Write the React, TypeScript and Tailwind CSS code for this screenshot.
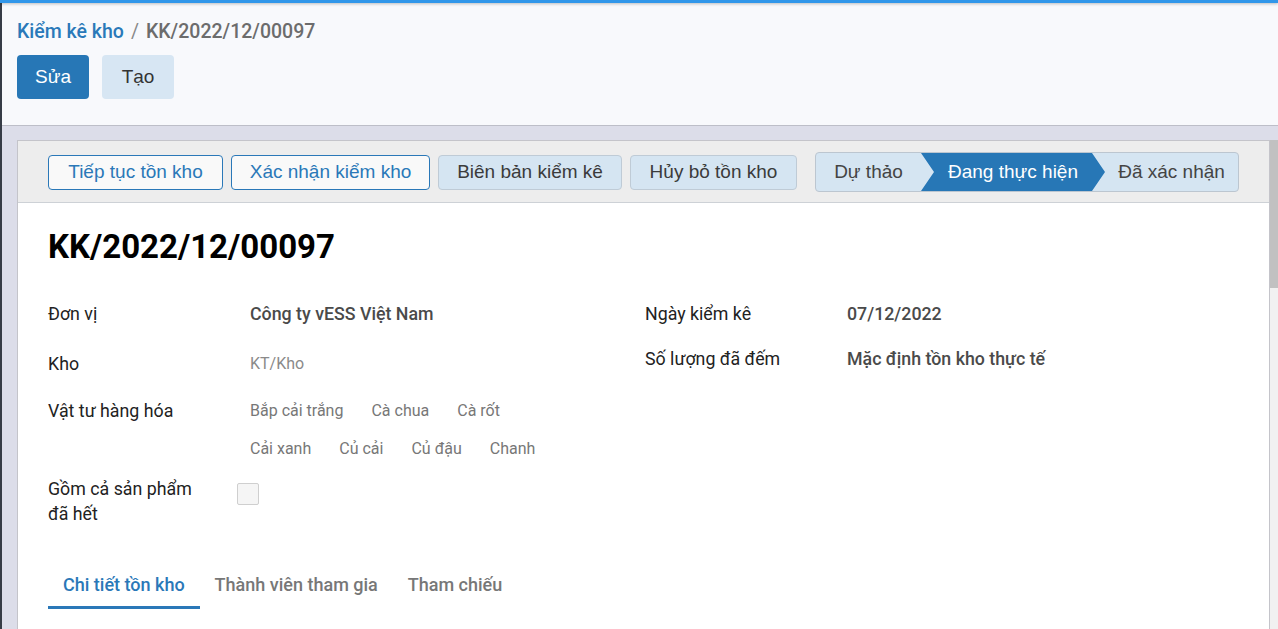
const tagsRow1 = ["Bắp cải trắng", "Cà chua", "Cà rốt"];
const tagsRow2 = ["Cải xanh", "Củ cải", "Củ đậu", "Chanh"];

const App = () => {
  return (
    <div className="h-[629px] w-[1278px] overflow-hidden flex flex-col font-['Roboto',sans-serif] bg-[#dcdde9]">
      {/* top accent bar */}
      <div className="h-[3px] bg-[#3197ea] relative z-10 shadow-[0_1px_3px_rgba(0,0,0,0.25)]"></div>

      <div className="flex flex-1 min-h-0">
        <div className="w-[2px] bg-[#363c46]"></div>

        <div className="flex-1 flex flex-col min-w-0">
          {/* Control panel */}
          <div className="h-[123px] bg-[#f8f9fc] border-b border-[#bdbec8] pl-[15px] pt-[17px]">
            <div className="flex items-center text-[19.5px] leading-[24px] font-medium">
              <span className="text-[#2a79b9]">Kiểm kê kho</span>
              <span className="text-[#888] mx-[7px] font-normal">/</span>
              <span className="text-[#6c6c6c]">KK/2022/12/00097</span>
            </div>
            <div className="flex gap-[13px] mt-[11px] font-['Liberation_Sans',Arial,sans-serif] text-[19px]">
              <button className="w-[72px] h-[44px] rounded-[4px] bg-[#2777b6] text-white">Sửa</button>
              <button className="w-[72px] h-[44px] rounded-[4px] bg-[#d7e6f3] text-[#333]">Tạo</button>
            </div>
          </div>

          {/* Main */}
          <div className="flex-1 flex pt-[14px] pl-[15px] min-h-0">
            <div className="flex-1 bg-white border border-[#c4c4ca] border-b-0 flex flex-col min-w-0">
              {/* status bar */}
              <div className="h-[62px] bg-[#ededed] border-b border-[#cdd1d6] flex items-center justify-between px-[30px] pt-[1px] font-['Liberation_Sans',Arial,sans-serif] text-[19px]">
                <div className="flex gap-[8px]">
                  <button className="h-[35px] w-[175px] rounded-[4px] border border-[#2a78b8] bg-[#f9f9f9] text-[#2a78b8]">Tiếp tục tồn kho</button>
                  <button className="h-[35px] w-[199px] rounded-[4px] border border-[#2a78b8] bg-[#f9f9f9] text-[#2a78b8]">Xác nhận kiểm kho</button>
                  <button className="h-[35px] w-[184px] rounded-[4px] border border-[#bfcbd6] bg-[#d5e5f2] text-[#3b3b3b]">Biên bản kiểm kê</button>
                  <button className="h-[35px] w-[167px] rounded-[4px] border border-[#bfcbd6] bg-[#d5e5f2] text-[#3b3b3b]">Hủy bỏ tồn kho</button>
                </div>
                <div className="flex h-[40px] w-[424px] rounded-[4px] border border-[#bcc6d0] bg-[#d5e5f2] overflow-hidden">
                  <div className="w-[105px] flex items-center justify-center text-[#444]">Dự thảo</div>
                  <div className="relative z-10 w-[184px] bg-[#2777b6] text-white flex items-center justify-center [clip-path:polygon(0_0,calc(100%-13px)_0,100%_50%,calc(100%-13px)_100%,0_100%,13px_50%)]">
                    Đang thực hiện
                  </div>
                  <div className="flex-1 -ml-[13px] pl-[13px] flex items-center justify-center text-[#444]">Đã xác nhận</div>
                </div>
              </div>

              {/* form body */}
              <div className="px-[30px] pt-[24px]">
                <h1 className="text-[33px] leading-[40px] font-bold text-black">KK/2022/12/00097</h1>

                <div className="grid grid-cols-[597px_1fr] mt-[34px] text-[17.8px] leading-[25px]">
                  {/* left column */}
                  <div>
                    <div className="flex h-[50px]">
                      <div className="w-[202px] text-[#222]">Đơn vị</div>
                      <div className="font-medium text-[#4a4a4a]">Công ty vESS Việt Nam</div>
                    </div>
                    <div className="flex h-[47px]">
                      <div className="w-[202px] text-[#222]">Kho</div>
                      <div className="text-[16px] text-[#8a8a8a]">KT/Kho</div>
                    </div>
                    <div className="flex mb-[15px]">
                      <div className="w-[202px] text-[#222]">Vật tư hàng hóa</div>
                      <div className="flex flex-col gap-y-[13px] text-[16px] text-[#777]">
                        <div className="flex gap-x-[28px]">
                          {tagsRow1.map((t) => (
                            <span key={t}>{t}</span>
                          ))}
                        </div>
                        <div className="flex gap-x-[28px]">
                          {tagsRow2.map((t) => (
                            <span key={t}>{t}</span>
                          ))}
                        </div>
                      </div>
                    </div>
                    <div className="flex">
                      <div className="w-[189px] text-[#222]">
                        Gồm cả sản phẩm
                        <br />
                        đã hết
                      </div>
                      <div className="mt-[7px] w-[22px] h-[22px] rounded-[2px] border border-[#cfcfcf] bg-[#f5f5f5]"></div>
                    </div>
                  </div>

                  {/* right column */}
                  <div>
                    <div className="flex h-[45px]">
                      <div className="w-[202px] text-[#222]">Ngày kiểm kê</div>
                      <div className="font-medium text-[#4a4a4a]">07/12/2022</div>
                    </div>
                    <div className="flex h-[45px]">
                      <div className="w-[202px] text-[#222]">Số lượng đã đếm</div>
                      <div className="font-medium text-[#4a4a4a]">Mặc định tồn kho thực tế</div>
                    </div>
                  </div>
                </div>

                {/* tabs */}
                <div className="flex mt-[47px] text-[18px] leading-[24px] font-medium">
                  <div className="px-[15px] pb-[9px] border-b-[3px] border-[#2a78b8] text-[#2a78b8]">Chi tiết tồn kho</div>
                  <div className="px-[15px] pb-[9px] border-b-[3px] border-transparent text-[#777]">Thành viên tham gia</div>
                  <div className="px-[15px] pb-[9px] border-b-[3px] border-transparent text-[#777]">Tham chiếu</div>
                </div>
              </div>
            </div>

            {/* scrollbar */}
            <div className="w-[8px] bg-[#f1f1f1]">
              <div className="h-[148px] bg-[#c1c1c1]"></div>
            </div>
          </div>
        </div>
      </div>
    </div>
  );
};

export default App;
